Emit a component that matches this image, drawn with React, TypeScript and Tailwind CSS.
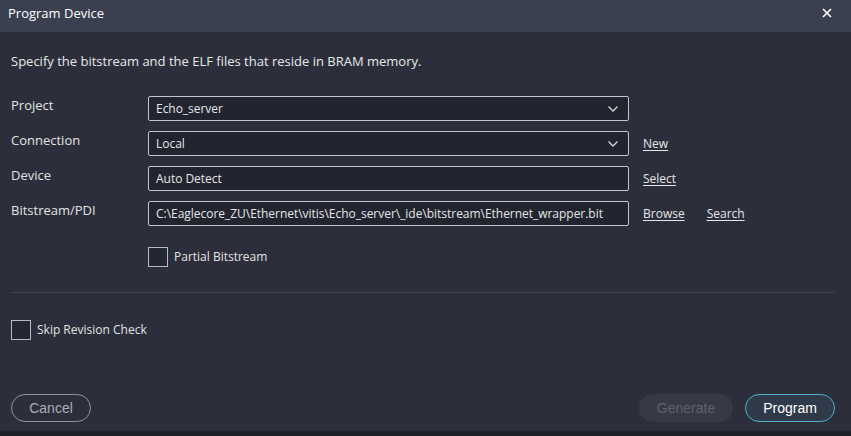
import React from "react";

const font = { fontFamily: '"Open Sans", "Noto Sans", sans-serif' };

function Chevron() {
  return (
    <svg width="12" height="8" viewBox="0 0 12 8" className="absolute right-[9px] top-[8px]">
      <path d="M1.5 1.5 L6 6 L10.5 1.5" fill="none" stroke="#d8d8d8" strokeWidth="1.3" />
    </svg>
  );
}

function Field({ value, select }: { value: string; select?: boolean }) {
  return (
    <div className="relative h-[25px] w-[481px] rounded-[2px] border border-[#c4c6cc] bg-[#222530] pl-[7px] text-[12px] leading-[23px] tracking-[-0.03px] text-[#e6e6e6]">
      {value}
      {select && <Chevron />}
    </div>
  );
}

function Link({ children }: { children: React.ReactNode }) {
  return <span className="text-[12px] text-[#e6e6e6] underline underline-offset-2">{children}</span>;
}

function Row({ label, children, links }: { label: string; children: React.ReactNode; links?: React.ReactNode }) {
  return (
    <div className="flex h-[25px] items-start">
      <div className="w-[137px] text-[13px] leading-[18px] text-[#e2e2e2]">{label}</div>
      {children}
      <div className="ml-[14px] flex h-[25px] items-center gap-[22px]">{links}</div>
    </div>
  );
}

function Checkbox({ label }: { label: string }) {
  return (
    <div className="flex items-center gap-[6px]">
      <div className="h-[20px] w-[20px] border border-[#b9bbc1] bg-[#232633]" />
      <span className="text-[12px] text-[#e2e2e2]">{label}</span>
    </div>
  );
}

export default function App() {
  return (
    <div className="flex h-[436px] w-[851px] flex-col overflow-hidden bg-[#2c2f3b]" style={font}>
      <div className="flex h-[32px] shrink-0 items-start justify-between bg-[#3b4050] pl-[8px] pr-[19px] pt-[4px]">
        <span className="text-[13px] leading-[18px] text-white">Program Device</span>
        <svg width="10" height="10" viewBox="0 0 10 10" className="mt-[4px]">
          <path d="M1 1 L9 9 M9 1 L1 9" stroke="#ffffff" strokeWidth="1.6" />
        </svg>
      </div>
      <div className="flex flex-1 flex-col px-[11px]">
        <div className="mt-[20px] text-[13px] leading-[18px] text-[#e8e8e8]">
          Specify the bitstream and the ELF files that reside in BRAM memory.
        </div>
        <div className="mt-[26px] flex flex-col gap-[10px]">
          <Row label="Project">
            <Field value="Echo_server" select />
          </Row>
          <Row label="Connection" links={<Link>New</Link>}>
            <Field value="Local" select />
          </Row>
          <Row label="Device" links={<Link>Select</Link>}>
            <Field value="Auto Detect" />
          </Row>
          <Row
            label="Bitstream/PDI"
            links={
              <>
                <Link>Browse</Link>
                <Link>Search</Link>
              </>
            }
          >
            <Field value="C:\Eaglecore_ZU\Ethernet\vitis\Echo_server\_ide\bitstream\Ethernet_wrapper.bit" />
          </Row>
        </div>
        <div className="mt-[21px] pl-[137px]">
          <Checkbox label="Partial Bitstream" />
        </div>
        <div className="mt-[25px] mr-[5px] h-px bg-[#41444f]" />
        <div className="mt-[27px]">
          <Checkbox label="Skip Revision Check" />
        </div>
        <div className="flex-1" />
        <div className="mb-[9px] flex items-center" style={{ fontFamily: '"Liberation Sans", Arial, sans-serif' }}>
          <button className="h-[28px] w-[80px] rounded-full border border-[#8f929a] text-[14px] text-[#a9acb3]">
            Cancel
          </button>
          <div className="flex-1" />
          <button className="h-[28px] w-[94px] rounded-full bg-[#363a47] text-[14px] text-[#5d616c]">Generate</button>
          <button className="ml-[12px] mr-[5px] h-[28px] w-[90px] rounded-full border border-[#4cb3c9] bg-[#2f3a4a] text-[14px] text-white">
            Program
          </button>
        </div>
      </div>
      <div className="h-[5px] shrink-0 overflow-hidden bg-[#1f2128]" />
    </div>
  );
}
